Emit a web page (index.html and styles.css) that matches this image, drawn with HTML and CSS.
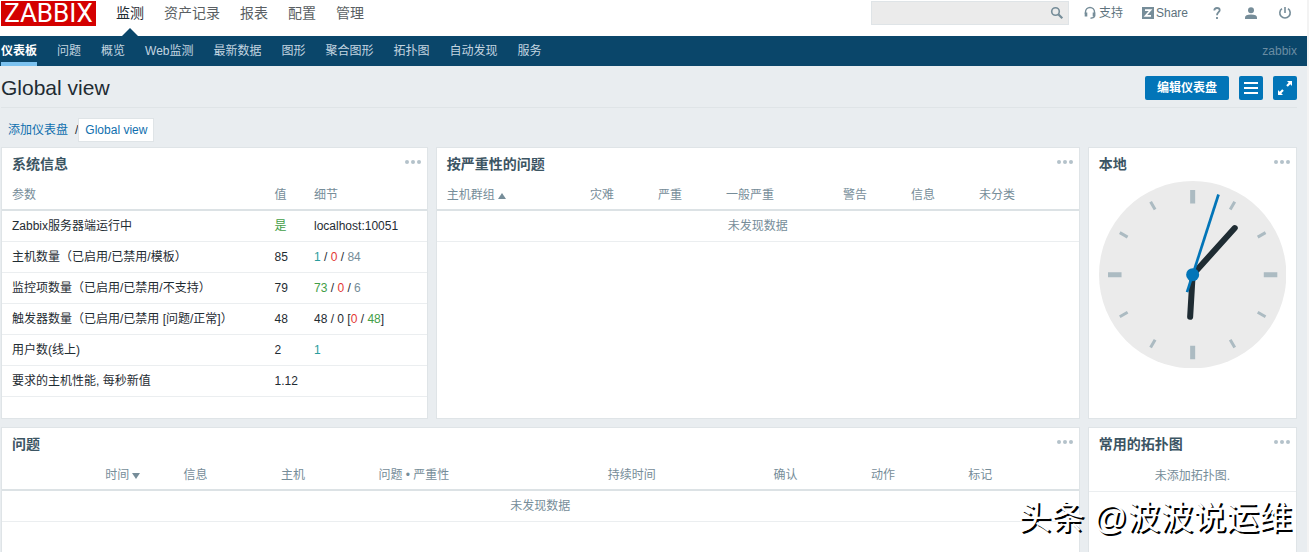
FILE: index.html
```html
<!DOCTYPE html>
<html lang="zh-CN">
<head>
<meta charset="utf-8">
<title>Global view</title>
<link rel="stylesheet" href="styles.css">
</head>
<body>
<div class="page">
  <header class="top">
    <a class="logo" href="#">ZABBIX</a>
    <nav class="main-nav">
      <a class="current" href="#">监测</a>
      <a href="#">资产记录</a>
      <a href="#">报表</a>
      <a href="#">配置</a>
      <a href="#">管理</a>
    </nav>
    <form class="search">
      <input type="text" aria-label="搜索">
      <button type="button" aria-label="搜索">
        <svg width="14" height="14" viewBox="0 0 14 14" fill="none" stroke="#768d99"><circle cx="5.5" cy="5.5" r="3.8" stroke-width="1.6"/><path d="M8.3 8.3l4 4" stroke-width="2.2"/></svg>
      </button>
    </form>
    <div class="tools">
      <a class="support" href="#"><svg width="12" height="14" viewBox="0 0 12 14" fill="none" stroke="#768d99"><path d="M1.5 8V6a4.5 4.5 0 0 1 9 0v3.5q0 2.5-4 2.7" stroke-width="1.4"/><path d="M2 6.5v4M10 6.5v4" stroke-width="2.6"/></svg>支持</a>
      <a class="share" href="#"><svg width="12" height="12" viewBox="0 0 12 12"><path fill="#768d99" d="M0 0h12v12H0z"/><path d="M3 3.2h5.5L3.5 8.8H9" fill="none" stroke="#fff" stroke-width="1.7"/></svg>Share</a>
      <a class="tool-icon" href="#" aria-label="帮助"><svg width="14" height="14" viewBox="0 0 14 14" fill="none" stroke="#768d99" stroke-width="1.8"><path d="M4.3 4.6Q4.3 2 7 2t2.7 2.2C9.700 6.200 7 6.200 7 9.300M7 11v2"/></svg></a>
      <a class="tool-icon" href="#" aria-label="用户"><svg width="14" height="14" viewBox="0 0 14 14" fill="#768d99"><circle cx="7" cy="4.200" r="3"/><path d="M1 13v-1.500q0-3 6-3t6 3V13z"/></svg></a>
      <a class="tool-icon" href="#" aria-label="退出"><svg width="14" height="14" viewBox="0 0 14 14" fill="none" stroke="#768d99" stroke-width="1.6"><path d="M4 2.600a5.200 5.200 0 1 0 6 0M7 1v6"/></svg></a>
    </div>
  </header>

  <nav class="sub-nav">
    <a class="current" href="#">仪表板</a>
    <a href="#">问题</a>
    <a href="#">概览</a>
    <a href="#">Web监测</a>
    <a href="#">最新数据</a>
    <a href="#">图形</a>
    <a href="#">聚合图形</a>
    <a href="#">拓扑图</a>
    <a href="#">自动发现</a>
    <a href="#">服务</a>
    <span class="server">zabbix</span>
  </nav>

  <div class="title-bar">
    <h1>Global view</h1>
    <button class="btn" type="button">编辑仪表盘</button>
    <button class="btn square" type="button" aria-label="菜单"><svg width="14" height="14" viewBox="0 0 14 14" fill="#fff"><path d="M0 1h14v2H0zM0 6h14v2H0zM0 11h14v2H0z"/></svg></button>
    <button class="btn square" type="button" aria-label="全屏"><svg width="14" height="14" viewBox="0 0 14 14" fill="#fff"><path d="M9 0h5v5l-1.700-1.700L9.800 5.800 8.200 4.200l2.500-2.500zM5 14H0V9l1.700 1.700 2.500-2.500 1.600 1.600-2.500 2.500z"/></svg></button>
  </div>

  <nav class="crumbs">
    <a href="#">添加仪表盘</a>
    <span class="slash">/</span>
    <a class="crumb-current" href="#">Global view</a>
  </nav>

  <main class="dashboard">
    <section class="panel system">
      <div class="panel-head"><h2>系统信息</h2><button class="more" type="button" aria-label="更多"><i></i><i></i><i></i></button></div>
      <table>
        <colgroup><col class="s-param"><col class="s-value"><col></colgroup>
        <thead><tr><th>参数</th><th>值</th><th>细节</th></tr></thead>
        <tbody>
          <tr><td>Zabbix服务器端运行中</td><td><span class="green">是</span></td><td>localhost:10051</td></tr>
          <tr><td>主机数量（已启用/已禁用/模板）</td><td>85</td><td><span class="teal">1</span> / <span class="red">0</span> / <span class="grey">84</span></td></tr>
          <tr><td>监控项数量（已启用/已禁用/不支持）</td><td>79</td><td><span class="green">73</span> / <span class="red">0</span> / <span class="grey">6</span></td></tr>
          <tr><td>触发器数量（已启用/已禁用 [问题/正常]）</td><td>48</td><td>48 / 0 [<span class="red">0</span> / <span class="green">48</span>]</td></tr>
          <tr><td>用户数(线上)</td><td>2</td><td><span class="teal">1</span></td></tr>
          <tr><td>要求的主机性能, 每秒新值</td><td>1.12</td><td></td></tr>
        </tbody>
      </table>
    </section>

    <section class="panel severity">
      <div class="panel-head"><h2>按严重性的问题</h2><button class="more" type="button" aria-label="更多"><i></i><i></i><i></i></button></div>
      <table>
        <colgroup><col class="v-group"><col class="v-short"><col class="v-short"><col class="v-long"><col class="v-short"><col class="v-short"><col></colgroup>
        <thead><tr><th>主机群组<span class="arrow up"></span></th><th>灾难</th><th>严重</th><th>一般严重</th><th>警告</th><th>信息</th><th>未分类</th></tr></thead>
        <tbody><tr><td class="empty" colspan="7">未发现数据</td></tr></tbody>
      </table>
    </section>

    <section class="panel clock">
      <div class="panel-head"><h2>本地</h2><button class="more" type="button" aria-label="更多"><i></i><i></i><i></i></button></div>
      <svg class="dial" viewBox="-93.5 -93.5 187 187">
        <circle r="93.500" fill="#ebebeb"/>
        <g stroke="#acbbc2" stroke-width="5"><path d="M0-84.500V-71M0 71V84.500M-84.500 0H-71M71 0H84.500"/></g>
        <g stroke="#acbbc2" stroke-width="3">
          <path d="M0-84V-75M0 84V75" transform="rotate(30)"/>
          <path d="M0-84V-75M0 84V75" transform="rotate(60)"/>
          <path d="M0-84V-75M0 84V75" transform="rotate(120)"/>
          <path d="M0-84V-75M0 84V75" transform="rotate(150)"/>
        </g>
        <path d="M42-46.500L0 0L-2.500 42" fill="none" stroke="#1f2c33" stroke-width="6" stroke-linecap="round"/>
        <path d="M25.800-80L-5.600 17.500" stroke="#0275b8" stroke-width="2.700"/>
        <circle r="6.500" fill="#0275b8"/>
      </svg>
    </section>

    <section class="panel problems">
      <div class="panel-head"><h2>问题</h2><button class="more" type="button" aria-label="更多"><i></i><i></i><i></i></button></div>
      <table>
        <colgroup><col class="p-time"><col class="p-line"><col class="p-short"><col class="p-short"><col class="p-problem"><col class="p-duration"><col class="p-short"><col class="p-short"><col></colgroup>
        <thead><tr><th class="right">时间<span class="arrow down"></span></th><th></th><th>信息</th><th>主机</th><th>问题 • 严重性</th><th>持续时间</th><th>确认</th><th>动作</th><th>标记</th></tr></thead>
        <tbody><tr><td class="empty" colspan="9">未发现数据</td></tr></tbody>
      </table>
    </section>

    <section class="panel maps">
      <div class="panel-head"><h2>常用的拓扑图</h2><button class="more" type="button" aria-label="更多"><i></i><i></i><i></i></button></div>
      <p class="no-maps">未添加拓扑图.</p>
    </section>
  </main>
  <div class="watermark">头条 @波波说运维</div>
</div>
</body>
</html>
```

FILE: styles.css
```css
* { box-sizing: border-box; }

body {
  margin: 0;
  background: #f3f3f3;
  color: #1f2c33;
  font: 12px/18px "Liberation Sans", "Noto Sans CJK SC", sans-serif;
}

a { color: inherit; text-decoration: none; }
button { border: 0; padding: 0; background: none; font: inherit; cursor: pointer; }
h1, h2, p { margin: 0; }

.page {
  position: relative;
  display: flex;
  flex-direction: column;
  min-height: 100vh;
  margin-right: 2px;
  background: #e9edf0;
}

/* header */
.top {
  display: flex;
  align-items: flex-start;
  height: 36px;
  padding: 1px 15px 0 1px;
  background: #fff;
  color: #5d727d;
}
.logo {
  width: 95px;
  background: #d40000;
  color: #fff;
  font: 26px/25px Roboto, sans-serif;
  text-align: center;
}
.main-nav {
  display: flex;
  gap: 20px;
  margin-left: 20px;
  font-size: 14px;
  line-height: 24px;
  color: #5a5f63;
}
.main-nav a { height: 35px; }
.main-nav .current { position: relative; color: #1f2c33; }
.main-nav .current::after {
  content: "";
  position: absolute;
  bottom: 0;
  left: 6px;
  border: 8px solid transparent;
  border-top-width: 0;
  border-bottom-color: #0a466a;
}
.search {
  display: flex;
  align-items: center;
  width: 198px;
  height: 24px;
  margin-left: auto;
  border: 1px solid #dfe4e7;
  background: #ebebeb;
}
.search input {
  flex: 1;
  min-width: 0;
  height: 22px;
  border: 0;
  padding: 0 5px;
  background: none;
  font: inherit;
  outline: 0;
}
.search button { display: flex; margin-right: 4px; }
.tools {
  display: flex;
  align-items: center;
  height: 24px;
  margin-left: 15px;
}
.tools a { display: flex; align-items: center; }
.support { gap: 3px; margin-right: 19px; }
.share { gap: 2px; margin-right: 2px; }
.tool-icon { margin-left: 20px; }

/* section navigation */
.sub-nav {
  display: flex;
  gap: 20px;
  height: 30px;
  padding: 0 10px 0 1px;
  background: #0a466a;
  color: #c3d5e0;
  line-height: 30px;
}
.sub-nav .current {
  border-bottom: 4px solid #7cc2f0;
  color: #fff;
  font-weight: bold;
}
.server { margin-left: auto; color: #6b8da3; }

/* page title */
.title-bar {
  display: flex;
  align-items: center;
  gap: 10px;
  height: 42px;
  margin: 0 10px 0 1px;
  padding-top: 2px;
  border-bottom: 1px solid #dfe4e7;
}
.title-bar h1 { margin-right: auto; font-size: 21px; font-weight: normal; line-height: 26px; }
.btn {
  display: flex;
  align-items: center;
  justify-content: center;
  height: 24px;
  padding: 0 12px;
  border-radius: 2px;
  background: #0275b8;
  color: #fff;
  font-weight: bold;
}
.square { width: 24px; padding: 0; }

.crumbs {
  display: flex;
  align-items: center;
  height: 39px;
  padding: 5px 0 0 8px;
  color: #0f6fae;
}
.slash { margin-left: 7px; color: #1f2c33; }
.crumb-current {
  padding: 1px 6px;
  border: 1px solid #dfe4e7;
  background: #fff;
  line-height: 20px;
}

/* dashboard */
.dashboard {
  flex: 1;
  display: grid;
  grid-template-columns: repeat(12, minmax(0, 1fr));
  grid-template-rows: 272px 1fr;
  gap: 8px;
  margin: 0 10px 0 1px;
}
.panel { border: 1px solid #dfe4e7; background: #fff; }
.system { grid-column: span 4; }
.severity { grid-column: span 6; }
.clock, .maps { grid-column: span 2; }
.problems { grid-column: span 10; }
.problems, .maps { border-bottom: 0; }

.panel-head {
  display: flex;
  justify-content: space-between;
  align-items: flex-start;
  height: 33px;
  padding: 6px 6px 0 10px;
}
.panel-head h2 { color: #3c5563; font-size: 14px; line-height: 20px; }
.more { display: flex; gap: 2px; padding: 6px 0; }
.more i { width: 4px; height: 4px; border-radius: 2px; background: #b4c2ca; }

table { width: 100%; border-collapse: separate; border-spacing: 0; table-layout: fixed; }
th, td { padding: 0 5px; text-align: left; white-space: nowrap; }
th {
  height: 30px;
  border-bottom: 2px solid #dce2e5;
  color: #768d99;
  font-weight: normal;
}
td { height: 31px; border-bottom: 1px solid #ebeef0; }
th:first-child, td:first-child { padding-left: 10px; }
th.right { text-align: right; }
td.empty { padding: 0; text-align: center; color: #768d99; }

.s-param { width: 63%; }
.s-value { width: 9.3%; }
.v-group { width: 23.1%; }
.v-short { width: 10.6%; }
.v-long { width: 18.2%; }
.p-time { width: 13.3%; }
.p-line { width: 3.1%; }
.p-short { width: 9.05%; }
.p-problem { width: 21.3%; }
.p-duration { width: 15.4%; }

.arrow { display: inline-block; margin-left: 3px; border: 4px solid transparent; }
.up { border-top-width: 0; border-bottom: 6px solid #768d99; }
.down { border-bottom-width: 0; border-top: 6px solid #768d99; }

.green { color: #429e47; }
.red { color: #e33734; }
.grey { color: #768d99; }
.teal { color: #2a9d9d; }

.dial { display: block; margin: 0 10px; }
.no-maps {
  height: 31px;
  border-bottom: 1px solid #ebeef0;
  color: #768d99;
  line-height: 30px;
  text-align: center;
}

.watermark {
  position: absolute;
  right: 15px;
  bottom: 12px;
  color: #fff;
  font-size: 33px;
  line-height: 44px;
  text-shadow: 2px 2px 0 #000;
  pointer-events: none;
}
```
